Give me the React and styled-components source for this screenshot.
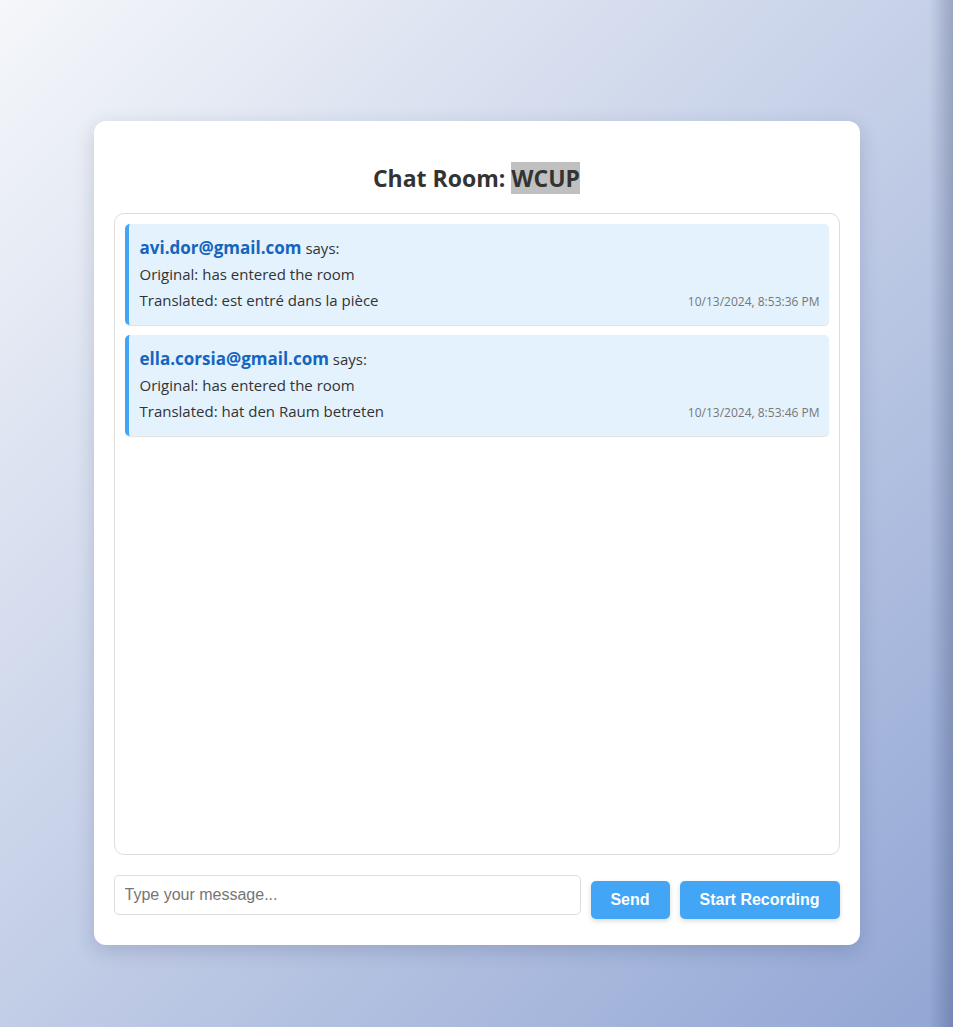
import React from "react";
import styled, { createGlobalStyle } from "styled-components";

const GlobalStyle = createGlobalStyle`
  html, body { margin: 0; padding: 0; }
  body {
    min-height: 1027px;
    font-family: "Open Sans", "Noto Sans", sans-serif;
    background:
      linear-gradient(to right, rgba(40, 55, 95, 0) calc(100% - 24px), rgba(40, 55, 95, 0.28) 100%),
      linear-gradient(135deg, #f5f7fa 0%, #92a6d4 100%);
  }
`;

const Page = styled.div`
  display: flex;
  justify-content: center;
  padding-top: 121px;
  padding-bottom: 82px;
`;

const Card = styled.div`
  width: 766px;
  box-sizing: border-box;
  background: #fff;
  border-radius: 12px;
  padding: 20px;
  box-shadow: 0 6px 20px rgba(30, 45, 90, 0.18);
  display: flex;
  flex-direction: column;
`;

const Title = styled.h2`
  margin: 21px 0 19px;
  text-align: center;
  font-family: "Open Sans", sans-serif;
  font-size: 23px;
  line-height: 32px;
  font-weight: 700;
  color: #333;
`;

const Room = styled.span`
  background: #c0c0c0;
`;

const ChatBox = styled.div`
  height: 642px;
  box-sizing: border-box;
  border: 1px solid #ddd;
  border-radius: 10px;
  padding: 10px;
  display: flex;
  flex-direction: column;
  gap: 10px;
`;

const Message = styled.div`
  background: #e3f2fd;
  border-left: 4px solid #42a5f5;
  border-radius: 5px;
  padding: 11px 9px 12px 11px;
  box-shadow: 0 1px 1px rgba(0, 0, 0, 0.12);
  color: #333;
  font-size: 15px;
`;

const Line = styled.div`
  line-height: 26px;
  height: 26px;
  display: flex;
  justify-content: space-between;
  align-items: baseline;
`;

const Sender = styled.span`
  color: #1565c0;
  font-weight: 700;
  font-size: 17px;
`;

const Says = styled.span`
  font-size: 15px;
`;

const Time = styled.span`
  font-size: 12px;
  color: #777;
`;

const InputRow = styled.div`
  display: flex;
  align-items: flex-start;
  margin-top: 20px;
`;

const Input = styled.input`
  flex: 0 0 467px;
  height: 40px;
  box-sizing: border-box;
  border: 1px solid #ddd;
  border-radius: 5px;
  padding: 0 10px;
  font-family: "Liberation Sans", Arial, sans-serif;
  font-size: 16px;
  color: #333;
  outline: none;
  &::placeholder { color: #757575; }
`;

const Button = styled.button`
  width: ${(p) => p.$w}px;
  height: 38px;
  margin: 6px 0 6px 10px;
  border: none;
  border-radius: 5px;
  background: #42a5f5;
  color: #fff;
  font-family: "Liberation Sans", Arial, sans-serif;
  font-weight: 700;
  font-size: 16px;
  box-shadow: 0 2px 5px rgba(0, 0, 0, 0.15);
  cursor: pointer;
`;

const messages = [
  {
    sender: "avi.dor@gmail.com",
    original: "has entered the room",
    translated: "est entré dans la pièce",
    time: "10/13/2024, 8:53:36 PM",
  },
  {
    sender: "ella.corsia@gmail.com",
    original: "has entered the room",
    translated: "hat den Raum betreten",
    time: "10/13/2024, 8:53:46 PM",
  },
];

export default function App() {
  return (
    <>
      <GlobalStyle />
      <Page>
        <Card>
          <Title>
            Chat Room: <Room>WCUP</Room>
          </Title>
          <ChatBox>
            {messages.map((m) => (
              <Message key={m.time}>
                <Line>
                  <span>
                    <Sender>{m.sender}</Sender> <Says>says:</Says>
                  </span>
                </Line>
                <Line>Original: {m.original}</Line>
                <Line>
                  <span>Translated: {m.translated}</span>
                  <Time>{m.time}</Time>
                </Line>
              </Message>
            ))}
          </ChatBox>
          <InputRow>
            <Input placeholder="Type your message..." />
            <Button $w={79}>Send</Button>
            <Button $w={160}>Start Recording</Button>
          </InputRow>
        </Card>
      </Page>
    </>
  );
}
